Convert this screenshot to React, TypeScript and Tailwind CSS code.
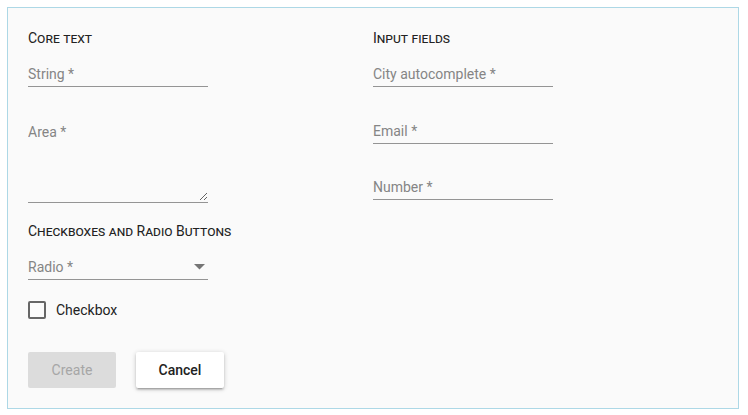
import React from 'react';

const font = { fontFamily: 'Roboto, "Noto Sans", sans-serif' };

const SectionTitle = ({ children }: { children: React.ReactNode }) => (
    <h3 className="text-[14px] leading-5 text-[#222] font-normal [font-variant-caps:small-caps]">{children}</h3>
);

const TextField = ({ label, className = '' }: { label: string; className?: string }) => (
    <div className={`w-[180px] border-b border-[#949494] pb-[2px] ${className}`}>
        <input
            placeholder={label}
            className="block w-full h-5 bg-transparent text-sm text-[#222] placeholder:text-[#858585] outline-none"
        />
    </div>
);

const App: React.FC = () => {
    return (
        <div className="min-h-screen bg-white pt-[7px] px-[7px]" style={font}>
            <form className="w-[732px] border border-[#add8e6] bg-[#fafafa] pt-5 pb-5 px-5">
                <div className="grid grid-cols-2">
                    {/* Core text */}
                    <div className="flex flex-col">
                        <SectionTitle>Core text</SectionTitle>
                        <TextField label="String *" className="mt-4" />
                        <div className="mt-[35px] w-[180px] border-b border-[#949494] pb-[1px]">
                            <textarea
                                placeholder="Area *"
                                className="block w-full h-[79px] bg-transparent text-sm leading-5 text-[#222] placeholder:text-[#858585] outline-none"
                            />
                        </div>
                    </div>

                    {/* Input fields */}
                    <div className="flex flex-col">
                        <SectionTitle>Input fields</SectionTitle>
                        <TextField label="City autocomplete *" className="mt-4" />
                        <TextField label="Email *" className="mt-[34px]" />
                        <TextField label="Number *" className="mt-[33px]" />
                    </div>

                    {/* Checkboxes and radios */}
                    <div className="flex flex-col mt-[18px]">
                        <SectionTitle>Checkboxes and Radio Buttons</SectionTitle>
                        <div className="relative mt-4 w-[180px] border-b border-[#949494] pb-[2px]">
                            <div className="h-5 text-sm leading-5 text-[#858585]">Radio *</div>
                            <svg className="absolute right-[3px] top-[7px]" width="11" height="6" viewBox="0 0 11 6">
                                <path d="M0 0h11L5.5 5.5z" fill="#757575" />
                            </svg>
                        </div>
                        <label className="mt-[20px] flex items-center gap-[10px]">
                            <span className="w-[18px] h-[18px] border-2 border-[#666] rounded-[2px]" />
                            <span className="text-sm leading-5 text-[#222]">Checkbox</span>
                        </label>
                    </div>
                </div>

                <div className="mt-[32px] flex gap-5">
                    <button type="button" disabled className="w-[88px] h-9 rounded-[2px] bg-[#dcdcdc] text-sm text-[#a6a6a6]">
                        Create
                    </button>
                    <button
                        type="button"
                        className="w-[88px] h-9 rounded-[2px] bg-white text-sm font-medium text-[#222] shadow-[0_1px_5px_0_rgba(0,0,0,0.2),0_2px_2px_0_rgba(0,0,0,0.14),0_3px_1px_-2px_rgba(0,0,0,0.12)]"
                    >
                        Cancel
                    </button>
                </div>
            </form>
        </div>
    );
};

export default App;
